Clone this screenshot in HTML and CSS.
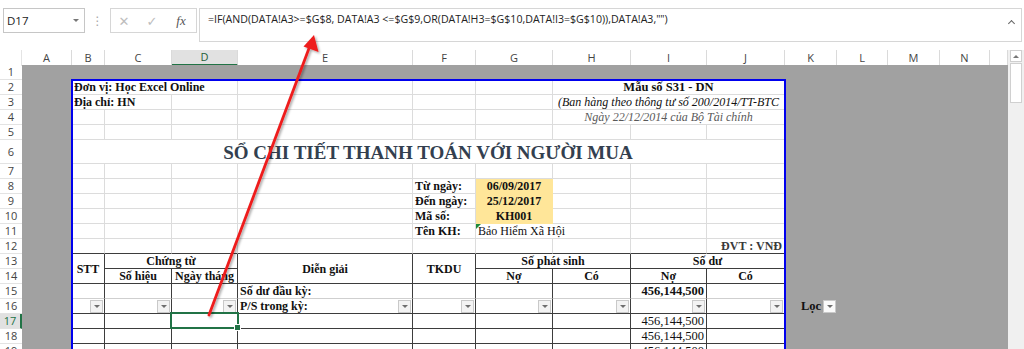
FILE: index.html
```html
<!DOCTYPE html>
<html lang="vi">
<head>
<meta charset="utf-8">
<title>Sổ chi tiết thanh toán</title>
<link rel="stylesheet" href="styles.css">
</head>
<body>
<div class="app">
  <div class="fbar">
    <div class="namebox"><span>D17</span><span class="nb-arrow"></span></div>
    <div class="dots">⋮</div>
    <div class="fxbox">
      <span class="ico x">✕</span>
      <span class="ico ok">✓</span>
      <span class="ico fx">fx</span>
    </div>
    <div class="formula">=IF(AND(DATA!A3&gt;=$G$8, DATA!A3 &lt;=$G$9,OR(DATA!H3=$G$10,DATA!I3=$G$10)),DATA!A3,"")<span class="caret"></span></div>
  </div>
  <div class="main">
    <div class="sheet">
      <div class="colhdr">
        <div class="ch corner"></div>
        <div class="ch">A</div><div class="ch">B</div><div class="ch">C</div><div class="ch chsel">D</div>
        <div class="ch">E</div><div class="ch">F</div><div class="ch">G</div><div class="ch">H</div>
        <div class="ch">I</div><div class="ch">J</div><div class="ch">K</div><div class="ch">L</div>
        <div class="ch">M</div><div class="ch">N</div><div class="ch"></div>
      </div>
      <div class="body">
        <div class="rowhdr">
          <div class="rh">1</div><div class="rh">2</div><div class="rh">3</div><div class="rh">4</div>
          <div class="rh">5</div><div class="rh">6</div><div class="rh">7</div><div class="rh">8</div>
          <div class="rh">9</div><div class="rh">10</div><div class="rh">11</div><div class="rh">12</div>
          <div class="rh">13</div><div class="rh">14</div><div class="rh">15</div><div class="rh">16</div>
          <div class="rh rhsel">17</div><div class="rh">18</div><div class="rh">19</div>
        </div>
        <div class="canvas">
          <div class="print">
            <!-- row 2 -->
            <div class="c b r2a">Đơn vị: Học Excel Online</div>
            <div class="c r2e"></div><div class="c r2f"></div><div class="c r2g"></div>
            <div class="c b r2h"><span class="mau">Mẫu số S31 - DN</span></div>
            <!-- row 3 -->
            <div class="c b sp2">Địa chỉ: HN</div>
            <div class="c"></div><div class="c"></div><div class="c"></div><div class="c"></div>
            <div class="c i ctr sp3">(Ban hàng theo thông tư số 200/2014/TT-BTC</div>
            <!-- row 4 -->
            <div class="c"></div><div class="c"></div><div class="c"></div><div class="c"></div>
            <div class="c"></div><div class="c"></div>
            <div class="c i ctr grey sp3">Ngày 22/12/2014 của Bộ Tài chính</div>
            <!-- row 5 -->
            <div class="c"></div><div class="c"></div><div class="c"></div><div class="c"></div><div class="c"></div>
            <div class="c"></div><div class="c"></div><div class="c"></div><div class="c"></div>
            <!-- row 6 -->
            <div class="c title sp9">SỔ CHI TIẾT THANH TOÁN VỚI NGƯỜI MUA</div>
            <!-- row 7 -->
            <div class="c"></div><div class="c"></div><div class="c"></div><div class="c"></div><div class="c"></div>
            <div class="c"></div><div class="c"></div><div class="c"></div><div class="c"></div>
            <!-- row 8 -->
            <div class="c"></div><div class="c"></div><div class="c"></div><div class="c"></div>
            <div class="c b">Từ ngày:</div>
            <div class="c b ctr y">06/09/2017</div>
            <div class="c"></div><div class="c"></div><div class="c"></div>
            <!-- row 9 -->
            <div class="c"></div><div class="c"></div><div class="c"></div><div class="c"></div>
            <div class="c b">Đến ngày:</div>
            <div class="c b ctr y">25/12/2017</div>
            <div class="c"></div><div class="c"></div><div class="c"></div>
            <!-- row 10 -->
            <div class="c"></div><div class="c"></div><div class="c"></div><div class="c"></div>
            <div class="c b">Mã số:</div>
            <div class="c b ctr y">KH001</div>
            <div class="c"></div><div class="c"></div><div class="c"></div>
            <!-- row 11 -->
            <div class="c"></div><div class="c"></div><div class="c"></div><div class="c"></div>
            <div class="c b">Tên KH:</div>
            <div class="c cm sp2">Bảo Hiểm Xã Hội</div>
            <div class="c"></div><div class="c"></div>
            <!-- row 12 -->
            <div class="c tb"></div><div class="c tb"></div><div class="c tb"></div><div class="c tb"></div>
            <div class="c tb"></div><div class="c tb"></div><div class="c tb"></div><div class="c tb"></div>
            <div class="c tb b r dvt">ĐVT : VNĐ</div>
            <!-- rows 13-14 header -->
            <div class="c t b mid rs2">STT</div>
            <div class="c t b ctr sp2">Chứng từ</div>
            <div class="c t b mid rs2">Diễn giải</div>
            <div class="c t b mid rs2">TKDU</div>
            <div class="c t b ctr sp2">Số phát sinh</div>
            <div class="c t b ctr sp2">Số dư</div>
            <div class="c t b ctr">Số hiệu</div>
            <div class="c t b ctr">Ngày tháng</div>
            <div class="c t b ctr">Nợ</div>
            <div class="c t b ctr">Có</div>
            <div class="c t b ctr">Nợ</div>
            <div class="c t b ctr">Có</div>
            <!-- row 15 -->
            <div class="c t lb"></div><div class="c t lb"></div><div class="c t lb"></div>
            <div class="c t lb b">Số dư đầu kỳ:</div>
            <div class="c t lb"></div><div class="c t lb"></div><div class="c t lb"></div>
            <div class="c t lb b r num">456,144,500</div>
            <div class="c t lb"></div>
            <!-- row 16 -->
            <div class="c t f"><span class="fb"></span></div>
            <div class="c t f"><span class="fb"></span></div>
            <div class="c t f"><span class="fb"></span></div>
            <div class="c t f ft"><span class="b">P/S trong kỳ:</span><span class="fb"></span></div>
            <div class="c t f"><span class="fb"></span></div>
            <div class="c t f"><span class="fb"></span></div>
            <div class="c t f"><span class="fb"></span></div>
            <div class="c t f"><span class="fb"></span></div>
            <div class="c t f"><span class="fb"></span></div>
            <!-- row 17 -->
            <div class="c t"></div><div class="c t"></div><div class="c t sel"></div>
            <div class="c t"></div><div class="c t"></div><div class="c t"></div><div class="c t"></div>
            <div class="c t r num">456,144,500</div>
            <div class="c t"></div>
            <!-- row 18 -->
            <div class="c t"></div><div class="c t"></div><div class="c t"></div>
            <div class="c t"></div><div class="c t"></div><div class="c t"></div><div class="c t"></div>
            <div class="c t r num">456,144,500</div>
            <div class="c t"></div>
            <!-- row 19 -->
            <div class="c t"></div><div class="c t"></div><div class="c t"></div>
            <div class="c t"></div><div class="c t"></div><div class="c t"></div><div class="c t"></div>
            <div class="c t r num">456,144,500</div>
            <div class="c t"></div>
          </div>
          <div class="loc"><span>Lọc</span><span class="fb"></span></div>
        </div>
      </div>
    </div>
    <div class="vscroll">
      <div class="vs-up"></div>
      <div class="vs-thumb"></div>
    </div>
  </div>
  <svg class="arrow" width="1024" height="349" viewBox="0 0 1024 349">
    <defs>
      <filter id="sh" x="-20%" y="-20%" width="140%" height="140%">
        <feDropShadow dx="1.5" dy="1.5" stdDeviation="1" flood-color="#000" flood-opacity="0.35"/>
      </filter>
    </defs>
    <g filter="url(#sh)">
      <line x1="209" y1="315" x2="309.5" y2="47" stroke="#ee1c1c" stroke-width="2.8" stroke-linecap="round"/>
      <polygon points="314,35 318.5,52 303.5,46.5" fill="#ee1c1c"/>
    </g>
  </svg>
</div>
</body>
</html>
```
FILE: styles.css
```css
html, body {
  margin: 0;
  padding: 0;
}
body {
  width: 1024px;
  height: 349px;
  overflow: hidden;
  background: #ffffff;
  font-family: "Open Sans", "Noto Sans", "DejaVu Sans", sans-serif;
}
.app {
  position: relative;
  width: 1024px;
  height: 349px;
  overflow: hidden;
}

/* ---------- formula bar ---------- */
.fbar {
  height: 50px;
  box-sizing: border-box;
  padding-top: 8px;
  display: flex;
  align-items: flex-start;
}
.namebox {
  margin-left: 3px;
  width: 82px;
  height: 25px;
  box-sizing: border-box;
  border: 1px solid #c6c6c6;
  display: flex;
  align-items: center;
  justify-content: space-between;
  padding: 0 5px 0 3px;
  font-size: 11.5px;
  color: #222;
}
.nb-arrow {
  width: 0;
  height: 0;
  border-left: 3px solid transparent;
  border-right: 3px solid transparent;
  border-top: 3px solid #777;
}
.dots {
  width: 25px;
  height: 25px;
  line-height: 25px;
  text-align: center;
  color: #a6a6a6;
  font-size: 12px;
}
.fxbox {
  width: 87px;
  height: 25px;
  box-sizing: border-box;
  border: 1px solid #d6d6d6;
  display: flex;
  align-items: center;
}
.ico {
  color: #bdbdbd;
  font-size: 13px;
  text-align: center;
}
.ico.x { width: 26px; }
.ico.ok { width: 30px; }
.ico.fx {
  width: 28px;
  font-family: "Liberation Serif", serif;
  font-style: italic;
  color: #555;
  font-size: 13px;
}
.formula {
  position: relative;
  margin-left: 2px;
  width: 823px;
  height: 34px;
  box-sizing: border-box;
  border: 1px solid #d6d6d6;
  padding: 3px 0 0 8px;
  font-size: 10.6px;
  color: #222;
  white-space: nowrap;
  background: #fff;
}
.caret {
  position: absolute;
  right: 7px;
  top: 12px;
  width: 5px;
  height: 5px;
  border-left: 1.5px solid #666;
  border-top: 1.5px solid #666;
  transform: rotate(45deg);
  box-sizing: border-box;
}

/* ---------- sheet ---------- */
.main {
  display: flex;
  height: 299px;
}
.sheet {
  width: 1008px;
  overflow: hidden;
}
.colhdr {
  display: grid;
  grid-template-columns: 22px 50px 33px 67px 66px 175px 63px 77px 78px 76px 78px 52px 51px 52px 50px 1fr;
  height: 15px;
}
.ch {
  box-sizing: border-box;
  border-right: 1px solid #dadada;
  text-align: center;
  font-size: 11px;
  line-height: 15px;
  color: #444;
  background: #fff;
}
.ch.corner { border-right: 1px solid #e4e4e4; }
.ch.chsel {
  background: #e1e1e1;
  border-bottom: 2px solid #217346;
  color: #1e5e3a;
  line-height: 14px;
}
.body {
  display: flex;
}
.rowhdr {
  width: 22px;
  flex: none;
  display: grid;
  grid-template-rows: repeat(5, 15px) 24px repeat(13, 15px);
}
.rh {
  box-sizing: border-box;
  border-bottom: 1px solid #e3e3e3;
  font-size: 11px;
  line-height: 14px;
  text-align: center;
  color: #444;
  display: flex;
  align-items: center;
  justify-content: center;
}
.rh.rhsel {
  background: #e1e1e1;
  color: #217346;
  border-right: 2px solid #217346;
}
.canvas {
  flex: 1;
  display: grid;
  grid-template-columns: 50px 713px 52px 51px 52px 50px 1fr;
  grid-template-rows: repeat(5, 15px) 24px repeat(13, 15px);
  background: #a1a1a1;
}
.print {
  position: relative;
  grid-column: 2;
  grid-row: 2 / span 18;
  display: grid;
  grid-template-columns: 33px 67px 66px 175px 63px 77px 78px 76px 78px;
  grid-template-rows: repeat(4, 15px) 24px repeat(13, 15px);
  background: #fff;
}
.print::after {
  content: "";
  position: absolute;
  left: -1px;
  top: -1px;
  right: -1px;
  bottom: -4px;
  border: 2px solid #0000ee;
  border-bottom: none;
  pointer-events: none;
}

/* cells */
.c {
  box-sizing: border-box;
  border-right: 1px solid #dcdcdc;
  border-bottom: 1px solid #dcdcdc;
  padding: 0 2px;
  font-family: "Liberation Serif", "Times New Roman", serif;
  font-size: 12px;
  line-height: 14px;
  color: #111;
  white-space: nowrap;
  min-width: 0;
}
.r2a { grid-row: 1; grid-column: 1 / 4; }
.r2e { grid-row: 1; grid-column: 4; }
.r2f { grid-row: 1; grid-column: 5; }
.r2g { grid-row: 1; grid-column: 6; }
.r2h {
  grid-row: 1;
  grid-column: 7 / 10;
  display: flex;
  justify-content: center;
  padding: 0;
}
.mau {
  display: block;
  font-size: 12.5px;
}
.b { font-weight: bold; }
.i { font-style: italic; }
.ctr { text-align: center; }
.r { text-align: right; }
.num { font-size: 12.5px; }
.grey { color: #595959; }
.sp2 { grid-column: span 2; }
.sp3 { grid-column: span 3; }
.sp4 { grid-column: span 4; }
.sp9 { grid-column: span 9; }
.rs2 { grid-row: span 2; }
.title {
  text-align: center;
  font-weight: bold;
  font-size: 19px;
  line-height: 22px;
  color: #333f4f;
  padding-top: 2px;
}
.y {
  background: #ffe699;
  border-color: #ffe699;
}
.cm { position: relative; }
.cm::before {
  content: "";
  position: absolute;
  left: 0;
  top: 0;
  border-top: 5px solid #1f8a3a;
  border-right: 5px solid transparent;
}
.dvt { color: #3a3a3a; }
.tb { border-bottom-color: #3d3d3d; }
.t {
  border-right-color: #3d3d3d;
  border-bottom-color: #3d3d3d;
}
.t.lb { border-bottom-color: #cfcfcf; }
.mid {
  display: flex;
  align-items: center;
  justify-content: center;
}
.f {
  display: flex;
  align-items: center;
  justify-content: flex-end;
  padding: 0 1px 0 2px;
}
.f.ft { justify-content: space-between; }
.fb {
  width: 13px;
  height: 13px;
  box-sizing: border-box;
  border: 1px solid #c9c9c9;
  background: #f3f3f3;
  display: inline-flex;
  align-items: center;
  justify-content: center;
  flex: none;
}
.fb::after {
  content: "";
  width: 0;
  height: 0;
  border-left: 3px solid transparent;
  border-right: 3px solid transparent;
  border-top: 3px solid #6e6e6e;
}
.sel { position: relative; }
.sel::before {
  content: "";
  position: absolute;
  left: -2px;
  top: -2px;
  right: -2px;
  bottom: -1px;
  border: 2px solid #217346;
}
.sel::after {
  content: "";
  position: absolute;
  right: -4px;
  bottom: -3px;
  width: 5px;
  height: 5px;
  background: #217346;
  border: 1px solid #fff;
}
.loc {
  grid-column: 3;
  grid-row: 16;
  display: flex;
  align-items: center;
  padding-left: 16px;
  gap: 2px;
  font-family: "Liberation Serif", "Times New Roman", serif;
  font-weight: bold;
  font-size: 12.5px;
  color: #111;
}
.loc .fb { background: #fafafa; }

/* scrollbar */
.vscroll {
  width: 16px;
  background: #f0f0f0;
  box-sizing: border-box;
  padding: 0 2px;
}
.vs-up {
  height: 12px;
  box-sizing: border-box;
  border: 1px solid #cfcfcf;
  background: #fff;
  display: flex;
  align-items: center;
  justify-content: center;
}
.vs-up::after {
  content: "";
  border-left: 3px solid transparent;
  border-right: 3px solid transparent;
  border-bottom: 3px solid #777;
}
.vs-thumb {
  margin-top: 1px;
  height: 40px;
  box-sizing: border-box;
  border: 1px solid #d0d0d0;
  background: #fff;
}

/* overlay arrow */
.arrow {
  position: absolute;
  left: 0;
  top: 0;
  pointer-events: none;
}
```
